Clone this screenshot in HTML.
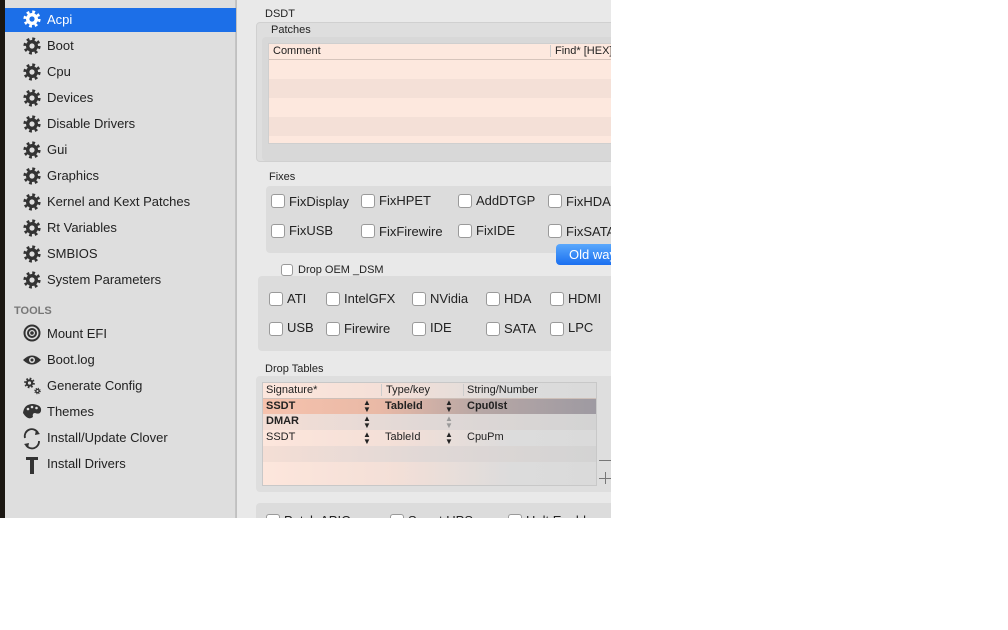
<!DOCTYPE html>
<html><head><meta charset="utf-8"><style>
*{margin:0;padding:0;box-sizing:border-box}
body{width:1008px;height:630px;background:#fff;position:relative;overflow:hidden;font-family:"Liberation Sans",sans-serif;color:#222}
.a{position:absolute}
.t{position:absolute;font-size:13px;white-space:nowrap;line-height:16px}
.s{font-size:11px;line-height:14px}
.cb{position:absolute;width:14px;height:14px;border:1px solid #9a9a9a;border-radius:3px;background:#fff}
.side .t{color:#222}
</style></head><body>
<div class="a" style="left:0;top:0;width:5px;height:518px;background:#1b1712"></div>
<div class="a side" style="left:5px;top:0;width:231px;height:518px;background:#dedede;border-right:1px solid #c4c4c4"></div>
<div class="a" style="left:236px;top:0;width:1px;height:518px;background:#c0c0c0"></div>
<div class="a" style="left:237px;top:0;width:374px;height:518px;background:#e9e9e9"></div>
<div class="a" style="left:5px;top:8px;width:231px;height:24px;background:#1c6fe8"></div>

<svg class="a" style="left:0;top:0" width="240" height="480">
<defs><g id="g"><circle r="6" fill="currentColor"/><circle r="7" fill="none" stroke="currentColor" stroke-width="3.2" stroke-dasharray="2.7 2.8"/><circle r="2.6" fill="var(--h)"/></g></defs>
<g style="color:#fff;--h:#1c6fe8" transform="translate(32,19)"><use href="#g"/></g>
<g style="color:#333;--h:#dedede">
<use href="#g" x="32" y="46"/><use href="#g" x="32" y="72"/><use href="#g" x="32" y="98"/><use href="#g" x="32" y="124"/><use href="#g" x="32" y="150"/><use href="#g" x="32" y="176"/><use href="#g" x="32" y="202"/><use href="#g" x="32" y="228"/><use href="#g" x="32" y="254"/><use href="#g" x="32" y="280"/>
<g transform="translate(29.5,383) scale(0.62)"><use href="#g"/></g>
<g transform="translate(37.5,391) scale(0.38)"><use href="#g"/></g>
</g></svg>
<div class="t" style="left:47px;top:12px;color:#fff">Acpi</div>
<div class="t" style="left:47px;top:38px">Boot</div>
<div class="t" style="left:47px;top:64px">Cpu</div>
<div class="t" style="left:47px;top:90px">Devices</div>
<div class="t" style="left:47px;top:116px">Disable Drivers</div>
<div class="t" style="left:47px;top:142px">Gui</div>
<div class="t" style="left:47px;top:168px">Graphics</div>
<div class="t" style="left:47px;top:194px">Kernel and Kext Patches</div>
<div class="t" style="left:47px;top:220px">Rt Variables</div>
<div class="t" style="left:47px;top:246px">SMBIOS</div>
<div class="t" style="left:47px;top:272px">System Parameters</div>
<div class="t s" style="left:14px;top:304px;color:#777;font-weight:bold;font-size:11px">TOOLS</div>
<svg class="a" style="left:20px;top:320px" width="24" height="160" fill="none" stroke="#333">
<circle cx="12" cy="13" r="7.5" stroke-width="2"/><circle cx="12" cy="13" r="4" stroke-width="2"/><circle cx="12" cy="13" r="1.3" fill="#333"/>
<path d="M3 40 Q12 31 21 40 Q12 49 3 40Z" fill="#333" stroke="none"/><circle cx="12" cy="40" r="3" fill="#dedede" stroke="none"/><circle cx="12" cy="40" r="1.5" fill="#333" stroke="none"/>
<path d="M3 93 Q4 84 13 84 Q22 85 21 91 Q20 95 15 93 Q12 93 13 97 Q8 101 3 93Z" fill="#333" stroke="none"/>
<circle cx="8" cy="89" r="1.3" fill="#dedede" stroke="none"/><circle cx="12" cy="87" r="1.3" fill="#dedede" stroke="none"/><circle cx="16.5" cy="88" r="1.3" fill="#dedede" stroke="none"/>
<path d="M5 118 A7 7 0 0 1 18 113 M19 121 A7 7 0 0 1 6 125" stroke-width="1.8"/><path d="M16 110 L20 114 L15 115Z M8 128 L4 124 L9 123Z" fill="#333" stroke="none"/>
<path d="M6 137 H18 V140 H14 V154 H10 V140 H6Z" fill="#333" stroke="none"/>
</svg>
<div class="t" style="left:47px;top:326px">Mount EFI</div>
<div class="t" style="left:47px;top:352px">Boot.log</div>
<div class="t" style="left:47px;top:378px">Generate Config</div>
<div class="t" style="left:47px;top:404px">Themes</div>
<div class="t" style="left:47px;top:430px">Install/Update Clover</div>
<div class="t" style="left:47px;top:456px">Install Drivers</div>

<!-- DSDT -->
<div class="t s" style="left:265px;top:7px">DSDT</div>
<div class="a" style="left:256px;top:22px;width:360px;height:140px;background:#dedede;border:1px solid #d0d0d0;border-radius:4px"></div>
<div class="t s" style="left:271px;top:23px">Patches</div>
<div class="a" style="left:262px;top:37px;width:360px;height:124px;background:#d8d8d8;border-radius:4px"></div>
<div class="a" style="left:268px;top:43px;width:350px;height:101px;background:#fde8de;border:1px solid #cfcfcf"></div>
<div class="a" style="left:269px;top:59px;width:350px;height:1px;background:#d6c4bb"></div>
<div class="a" style="left:269px;top:79px;width:350px;height:19px;background:#f4e0d7"></div>
<div class="a" style="left:269px;top:117px;width:350px;height:19px;background:#f4e0d7"></div>
<div class="a" style="left:550px;top:45px;width:1px;height:12px;background:#ccc"></div>
<div class="t s" style="left:273px;top:44px">Comment</div>
<div class="t s" style="left:555px;top:44px">Find* [HEX]</div>

<div class="t s" style="left:269px;top:170px">Fixes</div>
<div class="a" style="left:266px;top:186px;width:350px;height:67px;background:#dcdcdc;border-radius:4px"></div>
<div class="cb" style="left:271px;top:194px"></div><div class="t" style="left:289px;top:194px">FixDisplay</div>
<div class="cb" style="left:361px;top:194px"></div><div class="t" style="left:379px;top:193px">FixHPET</div>
<div class="cb" style="left:458px;top:194px"></div><div class="t" style="left:476px;top:193px">AddDTGP</div>
<div class="cb" style="left:548px;top:194px"></div><div class="t" style="left:566px;top:194px">FixHDA</div>
<div class="cb" style="left:271px;top:224px"></div><div class="t" style="left:289px;top:223px">FixUSB</div>
<div class="cb" style="left:361px;top:224px"></div><div class="t" style="left:379px;top:224px">FixFirewire</div>
<div class="cb" style="left:458px;top:224px"></div><div class="t" style="left:476px;top:223px">FixIDE</div>
<div class="cb" style="left:548px;top:224px"></div><div class="t" style="left:566px;top:224px">FixSATA</div>
<div class="a" style="left:556px;top:244px;width:70px;height:21px;background:linear-gradient(#5aa8fc,#1a6ff0);border-radius:4px;color:#fff;font-size:13px;line-height:21px;padding-left:13px">Old way</div>

<div class="cb" style="left:281px;top:264px;width:12px;height:12px"></div><div class="t s" style="left:298px;top:263px">Drop OEM _DSM</div>
<div class="a" style="left:258px;top:276px;width:360px;height:75px;background:#dcdcdc;border-radius:4px"></div>
<div class="cb" style="left:269px;top:292px"></div><div class="t" style="left:287px;top:291px">ATI</div>
<div class="cb" style="left:326px;top:292px"></div><div class="t" style="left:344px;top:291px">IntelGFX</div>
<div class="cb" style="left:412px;top:292px"></div><div class="t" style="left:430px;top:291px">NVidia</div>
<div class="cb" style="left:486px;top:292px"></div><div class="t" style="left:504px;top:291px">HDA</div>
<div class="cb" style="left:550px;top:292px"></div><div class="t" style="left:568px;top:291px">HDMI</div>
<div class="cb" style="left:269px;top:322px"></div><div class="t" style="left:287px;top:320px">USB</div>
<div class="cb" style="left:326px;top:322px"></div><div class="t" style="left:344px;top:321px">Firewire</div>
<div class="cb" style="left:412px;top:322px"></div><div class="t" style="left:430px;top:320px">IDE</div>
<div class="cb" style="left:486px;top:322px"></div><div class="t" style="left:504px;top:321px">SATA</div>
<div class="cb" style="left:550px;top:322px"></div><div class="t" style="left:568px;top:320px">LPC</div>

<div class="t s" style="left:265px;top:362px">Drop Tables</div>
<div class="a" style="left:256px;top:376px;width:360px;height:116px;background:#dedede;border-radius:4px"></div>
<div class="a" style="left:262px;top:382px;width:335px;height:104px;border:1px solid #c8c8c8;background:linear-gradient(90deg,#fde6dc 0%,#f3dfd7 40%,#dcdcdc 75%,#dadada 100%)"></div>
<div class="a" style="left:263px;top:398px;width:333px;height:1px;background:#cdbfb8"></div>
<div class="a" style="left:263px;top:399px;width:333px;height:15px;background:linear-gradient(90deg,#f6c2ad 0%,#e9b9a6 35%,#b7a7a5 65%,#9e9aa2 100%)"></div>
<div class="a" style="left:263px;top:414px;width:333px;height:16px;background:linear-gradient(90deg,#f4ded5,#e0d8d6 50%,#d3d3d3)"></div>
<div class="a" style="left:263px;top:446px;width:333px;height:16px;background:linear-gradient(90deg,#f4ded5,#e0d8d6 50%,#d3d3d3)"></div>
<div class="a" style="left:381px;top:384px;width:1px;height:12px;background:#ccc"></div>
<div class="a" style="left:463px;top:384px;width:1px;height:12px;background:#ccc"></div>
<div class="t s" style="left:266px;top:383px">Signature*</div>
<div class="t s" style="left:386px;top:383px">Type/key</div>
<div class="t s" style="left:467px;top:383px">String/Number</div>
<div class="t s" style="left:266px;top:399px;font-weight:bold">SSDT</div>
<div class="t s" style="left:385px;top:399px;font-weight:bold">TableId</div>
<div class="t s" style="left:467px;top:399px;font-weight:bold">Cpu0Ist</div>
<div class="t s" style="left:266px;top:414px;font-weight:bold">DMAR</div>
<div class="t s" style="left:266px;top:430px">SSDT</div>
<div class="t s" style="left:385px;top:430px">TableId</div>
<div class="t s" style="left:467px;top:430px">CpuPm</div>
<div class="t" style="left:363px;top:399px;font-size:8px;line-height:7px">▲<br>▼</div>
<div class="t" style="left:445px;top:399px;font-size:8px;line-height:7px">▲<br>▼</div>
<div class="t" style="left:363px;top:415px;font-size:8px;line-height:7px">▲<br>▼</div>
<div class="t" style="left:445px;top:415px;font-size:8px;line-height:7px;color:#999">▲<br>▼</div>
<div class="t" style="left:363px;top:431px;font-size:8px;line-height:7px">▲<br>▼</div>
<div class="t" style="left:445px;top:431px;font-size:8px;line-height:7px">▲<br>▼</div>
<div class="a" style="left:599px;top:460px;width:12px;height:1px;background:#777"></div>
<div class="a" style="left:599px;top:478px;width:12px;height:1px;background:#777"></div>
<div class="a" style="left:605px;top:472px;width:1px;height:12px;background:#777"></div>

<div class="a" style="left:256px;top:503px;width:360px;height:15px;background:#dcdcdc;border-radius:4px 4px 0 0"></div>
<div class="cb" style="left:266px;top:514px"></div><div class="t" style="left:284px;top:513px">Patch APIC</div>
<div class="cb" style="left:390px;top:514px"></div><div class="t" style="left:408px;top:513px">Smart UPS</div>
<div class="cb" style="left:508px;top:514px"></div><div class="t" style="left:526px;top:513px">Halt Enabler</div>
<div class="a" style="left:0;top:518px;width:1008px;height:112px;background:#fff"></div>
<div class="a" style="left:611px;top:0;width:397px;height:630px;background:#fff"></div>
</body></html>
